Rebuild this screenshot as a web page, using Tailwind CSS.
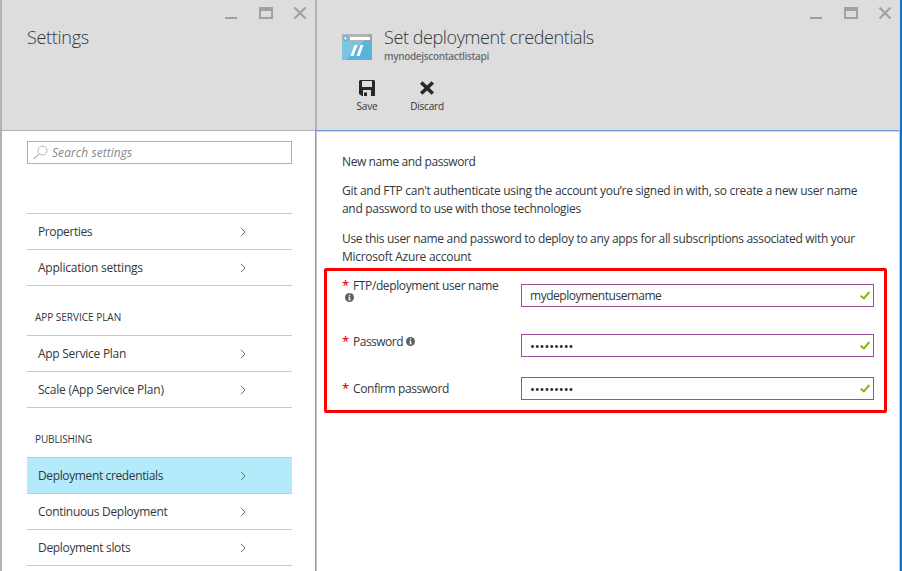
<!DOCTYPE html>
<html lang="en">
<head>
<meta charset="utf-8">
<title>Set deployment credentials</title>
<script src="https://cdn.jsdelivr.net/npm/@tailwindcss/browser@4"></script>
</head>
<body>
<svg class="hidden">
  <symbol id="chevron" viewBox="0 0 6 10"><path d="M1 .8 5 5 1 9.200" fill="none" stroke="#666a6e" stroke-width="1"/></symbol>
  <symbol id="check" viewBox="0 0 10 9"><path d="M.6 4.700 3.900 7.400 9.400 1" fill="none" stroke="#7fba00" stroke-width="2"/></symbol>
  <symbol id="info" viewBox="0 0 9 9"><circle cx="4.500" cy="4.500" r="4.500" fill="#5f6265"/><path d="M3.900 1.500h1.300v1.200H3.900zM3.400 3.700h1.800v2.900h.6v.7H3.300v-.7h.6V4.400h-.5z" fill="#fff"/></symbol>
  <symbol id="window-buttons" viewBox="0 0 82 14">
    <path d="M0 11h12v2H0z" fill="#a0a1a3"/>
    <path d="M34 1h14v12H34zM36 5v6h10V5z" fill="#a0a1a3" fill-rule="evenodd"/>
    <path d="M69.500 1.500 80.500 12.500M80.500 1.500 69.500 12.500" stroke="#a0a1a3" stroke-width="2.200"/>
  </symbol>
</svg>
<div class="flex h-[571px] w-[902px] overflow-hidden bg-white font-['Open_Sans','Noto_Sans',sans-serif] text-[12px] text-[#33373b]">

  <section class="flex w-[315px] shrink-0 flex-col border-l-2 border-[#b2b2b2]">
    <header class="h-[131px] shrink-0 border-b border-[#b2b2b2] bg-[#ddd] pl-[25px]">
      <div class="flex h-[25px] justify-end pt-[6px] pr-[8px]"><svg class="h-[14px] w-[82px]"><use href="#window-buttons"/></svg></div>
      <h1 class="w-max text-[18px] leading-[24px] font-light tracking-[-0.3px]">Settings</h1>
    </header>
    <div class="pt-[10px] pl-[25px]">
      <div class="flex h-[23px] w-[265px] items-center border border-[#b2b2b2] pl-[5px] text-[#85898c] italic">
        <svg class="-mt-px h-[15px] w-[15px]" viewBox="0 0 15 15" fill="none" stroke="#b4b4b4"><circle cx="9.500" cy="5.500" r="4.500"/><path d="M6 8.800.8 14" stroke-width="1.200"/></svg>
        <span class="ml-[4px] pt-px tracking-[0.06px]">Search settings</span>
      </div>
      <nav class="mt-[49px] w-[265px]">
        <ul class="border-t border-[#c8c8c8]">
          <li class="flex h-[36px] items-center justify-between border-b border-[#c8c8c8] pr-[46px] pl-[11px]"><span class="pt-px tracking-[-0.4px]">Properties</span><svg class="h-[10px] w-[6px]"><use href="#chevron"/></svg></li>
          <li class="flex h-[36px] items-center justify-between border-b border-[#c8c8c8] pr-[46px] pl-[11px]"><span class="pt-px tracking-[-0.23px]">Application settings</span><svg class="h-[10px] w-[6px]"><use href="#chevron"/></svg></li>
        </ul>
        <h2 class="flex h-[49px] items-end pb-[10px] pl-[8px] text-[10px] leading-[16px] font-medium tracking-[-0.02px]">APP SERVICE PLAN</h2>
        <ul class="border-t border-[#c8c8c8]">
          <li class="flex h-[36px] items-center justify-between border-b border-[#c8c8c8] pr-[46px] pl-[11px]"><span class="pt-px tracking-[-0.28px]">App Service Plan</span><svg class="h-[10px] w-[6px]"><use href="#chevron"/></svg></li>
          <li class="flex h-[36px] items-center justify-between border-b border-[#c8c8c8] pr-[46px] pl-[11px]"><span class="pt-px tracking-[-0.24px]">Scale (App Service Plan)</span><svg class="h-[10px] w-[6px]"><use href="#chevron"/></svg></li>
        </ul>
        <h2 class="flex h-[49px] items-end pb-[10px] pl-[8px] text-[10px] leading-[16px] font-medium tracking-[-0.12px]">PUBLISHING</h2>
        <ul class="border-t border-[#c8c8c8]">
          <li class="flex h-[36px] items-center justify-between border-b border-[#c8c8c8] bg-[#b3ebfb] pr-[46px] pl-[11px]"><span class="pt-px tracking-[-0.37px]">Deployment credentials</span><svg class="h-[10px] w-[6px]"><use href="#chevron"/></svg></li>
          <li class="flex h-[36px] items-center justify-between border-b border-[#c8c8c8] pr-[46px] pl-[11px]"><span class="pt-px tracking-[-0.32px]">Continuous Deployment</span><svg class="h-[10px] w-[6px]"><use href="#chevron"/></svg></li>
          <li class="flex h-[36px] items-center justify-between border-b border-[#c8c8c8] pr-[46px] pl-[11px]"><span class="pt-px tracking-[-0.33px]">Deployment slots</span><svg class="h-[10px] w-[6px]"><use href="#chevron"/></svg></li>
        </ul>
      </nav>
    </div>
  </section>

  <section class="flex w-[587px] shrink-0 flex-col border-r-2 border-[#1173c7]">
    <header class="h-[130px] shrink-0 border-l-2 border-[#b2b2b2] bg-[#ddd]">
      <div class="flex h-[25px] justify-end pt-[6px] pr-[8px]"><svg class="h-[14px] w-[82px]"><use href="#window-buttons"/></svg></div>
      <div class="flex pl-[25px]">
        <svg class="mt-[9px] h-[26px] w-[30px]" viewBox="0 0 30 26">
          <rect width="30" height="26" rx="1" fill="#59b4d9"/>
          <path d="M0 7h22L4 26H1l-1-1z" fill="#7ac3e1"/>
          <path d="M0 7V1l1-1h28l1 1v6z" fill="#a0a1a2"/><path d="M0 7V1l1-1h27l-7 7z" fill="#b3b4b5"/>
          <path d="M8 3h20v3H8z" fill="#fff"/>
          <circle cx="4" cy="4.200" r="3" fill="#59b4d9"/><path d="M2 4.200h4M4 2.400 2.200 4.200 4 6" stroke="#fff" stroke-width=".8" fill="none"/>
          <path d="M12.500 11h3L11.500 22h-3zM18.500 11h3L17.500 22h-3z" fill="#fff"/>
        </svg>
        <div class="ml-[12px]">
          <h1 class="w-max text-[18px] leading-[24px] font-light tracking-[-0.41px]">Set deployment credentials</h1>
          <p class="mt-px w-max text-[10px] leading-[13px] font-semibold tracking-[-0.34px] text-[#6d7073]">mynodejscontactlistapi</p>
        </div>
      </div>
      <div class="flex pt-[17px] pl-[20px] text-[10px]">
        <div class="flex w-[60px] flex-col items-center">
          <svg class="h-[16px] w-[16px]" viewBox="0 0 16 16"><path d="M1 0h14l1 1v15H3l-3-2V1zM3 1v6h10V1zM4 10v6h8v-6zM5 12.500h3V16H5z" fill="#24292e" fill-rule="evenodd"/></svg>
          <span class="mt-[3px] leading-[14px] tracking-[-0.15px]">Save</span>
        </div>
        <div class="flex w-[60px] flex-col items-center">
          <svg class="h-[16px] w-[16px]" viewBox="0 0 16 16"><path d="M2.200 2.500 13.800 13.500M13.800 2.500 2.200 13.500" stroke="#24292e" stroke-width="3.600"/></svg>
          <span class="mt-[3px] leading-[14px] tracking-[-0.2px]">Discard</span>
        </div>
      </div>
    </header>
    <div class="flex-1 border-t border-r border-l border-t-[#769de0] border-r-[#a9c8f5] border-l-[#7b9cd8]">
      <div class="h-full border-t border-l border-t-[#c0d6fa] border-l-[#c6c6c6] pt-[21px] pl-[25px] leading-[18px]">
        <p class="tracking-[-0.4px] whitespace-nowrap">New name and password</p>
        <p class="mt-[11px] whitespace-nowrap"><span class="tracking-[-0.29px]">Git and FTP can't authenticate using the account you’re signed in with, so create a new user name</span><br><span class="tracking-[-0.3px]">and password to use with those technologies</span></p>
        <p class="mt-[12px] whitespace-nowrap"><span class="tracking-[-0.32px]">Use this user name and password to deploy to any apps for all subscriptions associated with your</span><br><span class="tracking-[-0.28px]">Microsoft Azure account</span></p>
        <form class="mt-[2px] -ml-[18px] h-[145px] w-[563px] rounded-[2px] border-[3px] border-[#f00] pt-[6px] pl-[15px]">
          <div class="flex h-[56px]">
            <label class="w-[179px]"><span class="flex h-[18px] items-center"><b class="-mt-[3px] w-[11px] text-[13px] font-semibold text-[#e81123]">*</b><span class="tracking-[-0.38px]">FTP/deployment user name</span></span><svg class="-mt-[2px] ml-[3px] h-[9px] w-[9px]"><use href="#info"/></svg></label>
            <div class="mt-[7px] flex h-[23px] w-[353px] items-center justify-between border border-[#9b4f96] pr-[3px] pl-[8px]"><span class="pt-px tracking-[-0.48px]">mydeploymentusername</span><svg class="h-[9px] w-[10px]"><use href="#check"/></svg></div>
          </div>
          <div class="flex h-[47px]">
            <label class="flex h-[18px] w-[179px] items-center"><b class="-mt-[3px] w-[11px] text-[13px] font-semibold text-[#e81123]">*</b><span class="tracking-[-0.5px]">Password</span><svg class="-mt-px ml-[3px] h-[9px] w-[9px]"><use href="#info"/></svg></label>
            <div class="mt-px flex h-[23px] w-[353px] items-center justify-between border border-[#9b4f96] pr-[3px] pl-[8px]"><span class="pt-px text-[13px] tracking-[-0.08px] text-[#222]">•••••••••</span><svg class="h-[9px] w-[10px]"><use href="#check"/></svg></div>
          </div>
          <div class="flex">
            <label class="flex h-[18px] w-[179px] items-center"><b class="-mt-[3px] w-[11px] text-[13px] font-semibold text-[#e81123]">*</b><span class="tracking-[-0.42px]">Confirm password</span></label>
            <div class="-mt-[3px] flex h-[23px] w-[353px] items-center justify-between border border-[#9b4f96] pr-[3px] pl-[8px]"><span class="pt-px text-[13px] tracking-[-0.08px] text-[#222]">•••••••••</span><svg class="h-[9px] w-[10px]"><use href="#check"/></svg></div>
          </div>
        </form>
      </div>
    </div>
  </section>
</div>
</body>
</html>
